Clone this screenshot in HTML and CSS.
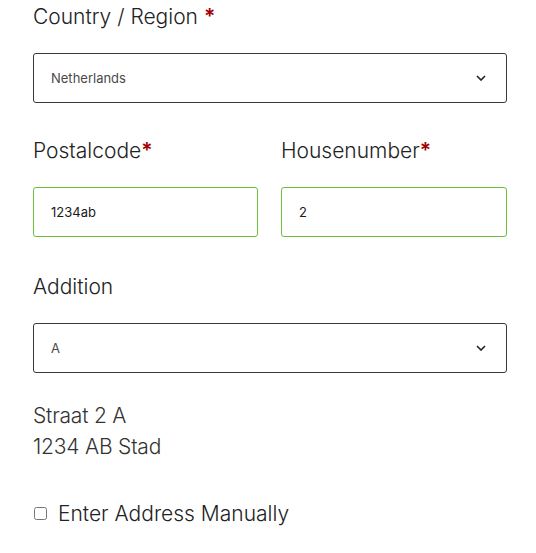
FILE: index.html
```html
<!DOCTYPE html>
<html lang="en">
<head>
<meta charset="utf-8">
<link rel="stylesheet" href="styles.css">
</head>
<body>
<form class="form">
  <div class="field">
    <label class="label">Country / Region <span class="req">*</span></label>
    <div class="select-wrap">
      <select class="control select"><option>Netherlands</option></select>
      <svg class="chev" width="10" height="6" viewBox="0 0 10 6"><path d="M1 1l4 4 4-4" fill="none" stroke="#222" stroke-width="1.6"/></svg>
    </div>
  </div>
  <div class="row">
    <div class="field">
      <label class="label">Postalcode<span class="req">*</span></label>
      <input class="control valid" type="text" value="1234ab">
    </div>
    <div class="field">
      <label class="label">Housenumber<span class="req">*</span></label>
      <input class="control valid" type="text" value="2">
    </div>
  </div>
  <div class="field">
    <label class="label">Addition</label>
    <div class="select-wrap">
      <select class="control select"><option>A</option></select>
      <svg class="chev" width="10" height="6" viewBox="0 0 10 6"><path d="M1 1l4 4 4-4" fill="none" stroke="#222" stroke-width="1.6"/></svg>
    </div>
  </div>
  <div class="address">
    <div>Straat 2 A</div>
    <div>1234 AB Stad</div>
  </div>
  <label class="check">
    <input type="checkbox" class="box">
    <span>Enter Address Manually</span>
  </label>
</form>
</body>
</html>
```
FILE: styles.css
```css
* { box-sizing: border-box; }
html, body { margin: 0; padding: 0; background: #fff; }
body {
  font-family: Inter, "Noto Sans", sans-serif;
  font-weight: 300;
  color: #222;
}
.form {
  width: 536px;
  padding: 0 29px 0 33px;
  display: flex;
  flex-direction: column;
}
.field { display: flex; flex-direction: column; margin-bottom: 31px; }
.label {
  font-size: 21px;
  line-height: 34px;
  letter-spacing: 0;
  margin-bottom: 19px;
  color: #222;
}
.req { color: #a00000; font-weight: 600; }
.row { display: grid; grid-template-columns: 225px 226px; column-gap: 23px; }
.row .field { margin-bottom: 33px; }
.select-wrap { position: relative; }
.control {
  display: block;
  width: 100%;
  height: 50px;
  border: 1px solid #3e3535;
  border-radius: 3px;
  padding: 0 0 0 17px;
  font-family: Inter, "Noto Sans", sans-serif;
  font-size: 13px;
  font-weight: 400;
  color: #333;
  background: #fff;
  outline: none;
}
.select { -webkit-appearance: none; appearance: none; color: #4a4a4a; }
.valid { border-color: #6cbf3a; color: #1a1a1a; }
.chev { position: absolute; right: 21px; top: 22px; pointer-events: none; }
.address {
  margin-top: -4px;
  font-size: 21px;
  line-height: 31px;
  letter-spacing: -0.2px;
  color: #333;
}
.check {
  margin-top: 36px;
  display: flex;
  align-items: center;
  font-size: 21px;
  line-height: 31px;
  letter-spacing: 0;
  color: #222;
}
.box { margin: 0 11px 0 1px; width: 13px; height: 13px; }
```
